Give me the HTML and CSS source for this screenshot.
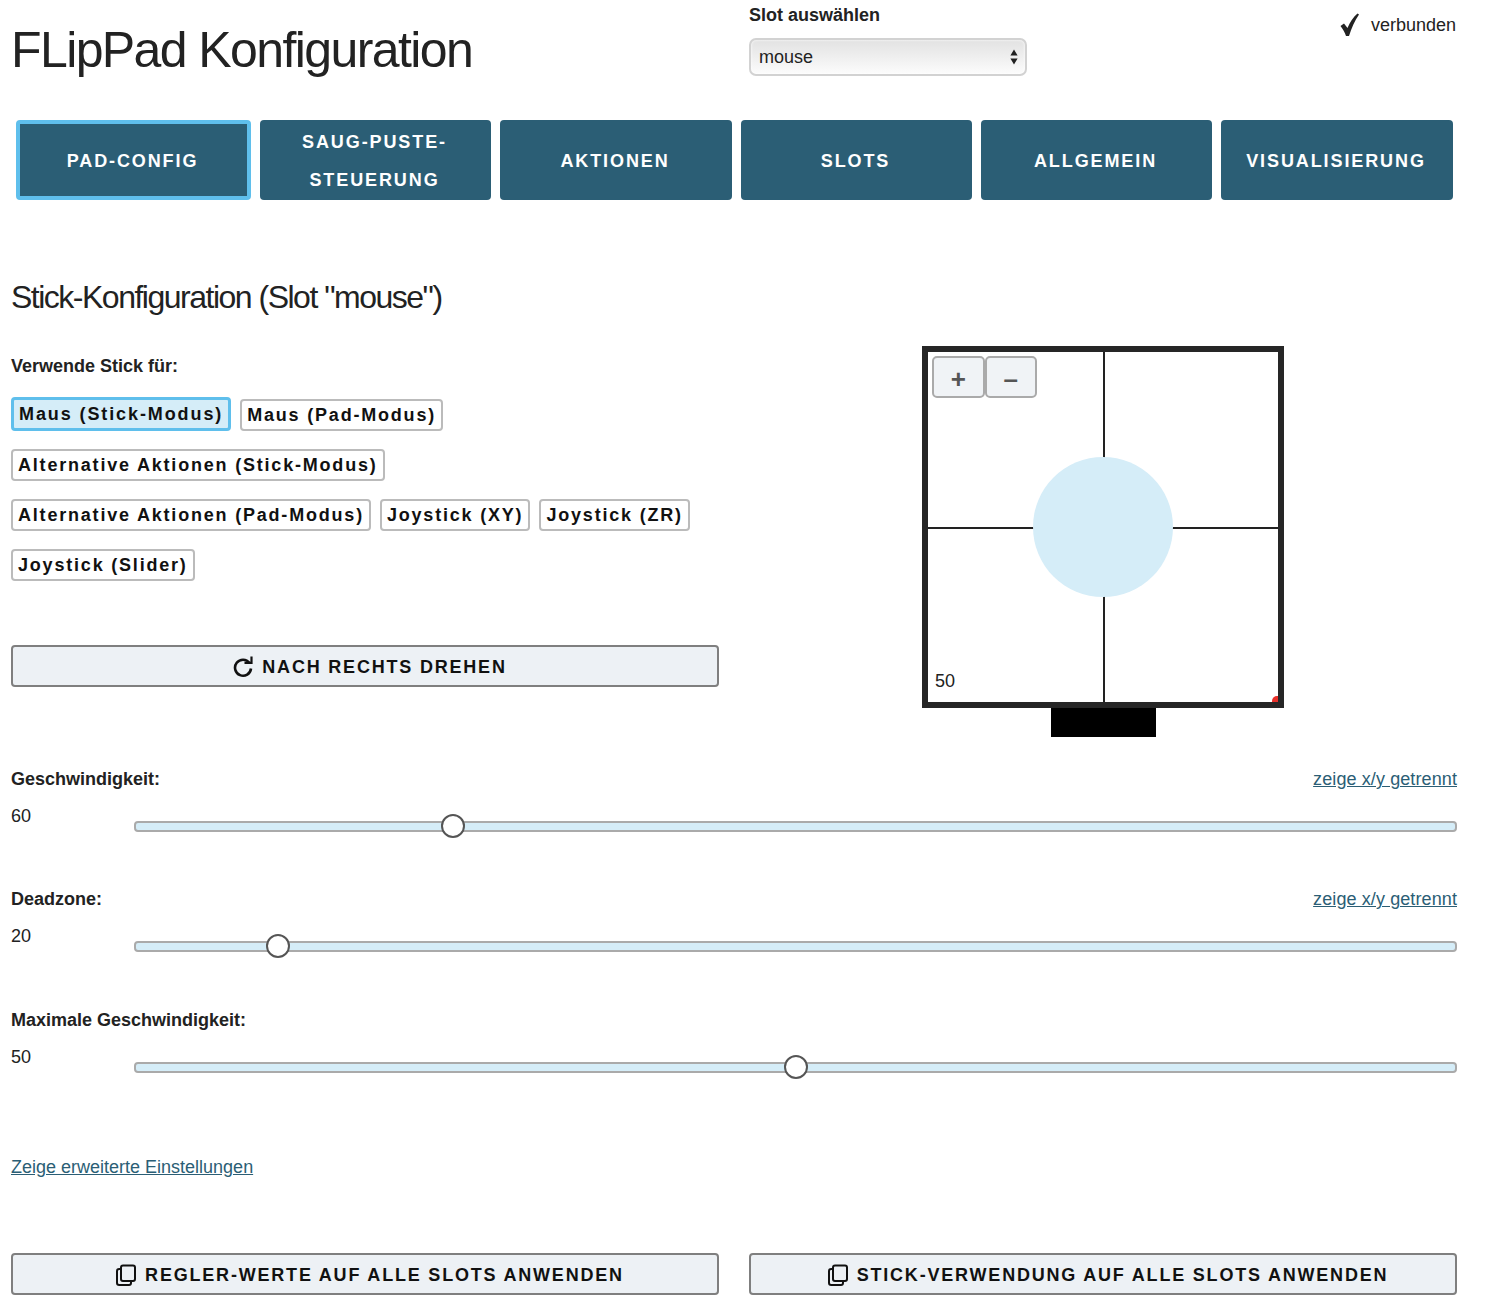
FILE: index.html
```html
<!DOCTYPE html>
<html lang="de">
<head>
    <meta charset="UTF-8">
    <meta name="viewport" content="width=device-width, initial-scale=1.0">
    <title>FLipPad Konfiguration</title>
    <link rel="stylesheet" href="styles.css">
</head>
<body>
    <div class="page">
        <!-- Header -->
        <header class="header">
            <h1 class="title">FLipPad Konfiguration</h1>
            <div class="header-right">
                <div class="slot-box">
                    <label class="field-label" for="slot-select">Slot auswählen</label>
                    <div class="select-wrap">
                        <select id="slot-select" class="slot-select">
                            <option>mouse</option>
                        </select>
                        <svg class="select-arrows" width="8" height="16" viewBox="0 0 8 16"><path d="M4 0.5L7.6 6.5H0.4Z M4 15.5L0.4 9.5H7.6Z" fill="#222"/></svg>
                    </div>
                </div>
                <div class="status">
                    <svg class="status-icon" width="20" height="24" viewBox="0 0 20 24"><path d="M0.5 13L4 10.500L7.500 15C10 9 13 4.500 17.500 0.500L19 1.500C14.500 8 11.500 15 9 23H6C5 19.500 3 16.500 0.5 13Z" fill="#222"/></svg>
                    <span>verbunden</span>
                </div>
            </div>
        </header>

        <!-- Tabs -->
        <nav class="tabs">
            <button class="tab tab-active">Pad-Config</button>
            <button class="tab">Saug-Puste-Steuerung</button>
            <button class="tab">Aktionen</button>
            <button class="tab">Slots</button>
            <button class="tab">Allgemein</button>
            <button class="tab">Visualisierung</button>
        </nav>

        <h2 class="section-title">Stick-Konfiguration (Slot "mouse")</h2>

        <div class="columns">
            <div class="stick-options">
                <div class="field-label">Verwende Stick für:</div>
                <div class="mode-list">
                    <button class="mode mode-active">Maus (Stick-Modus)</button>
                    <button class="mode">Maus (Pad-Modus)</button>
                    <button class="mode">Alternative Aktionen (Stick-Modus)</button>
                    <button class="mode">Alternative Aktionen (Pad-Modus)</button>
                    <button class="mode">Joystick (XY)</button>
                    <button class="mode">Joystick (ZR)</button>
                    <button class="mode">Joystick (Slider)</button>
                </div>
                <button class="action rotate-button">
                    <svg width="20" height="22" viewBox="0 0 20 22" fill="none"><path d="M16.500 7A8 8 0 1 0 18 12.500" stroke="#111" stroke-width="2.600"/><path d="M11.500 6.800H18.500V0.500" stroke="#111" stroke-width="2.200"/></svg>
                    Nach rechts drehen
                </button>
            </div>

            <div class="stick-view">
                <div class="stick-canvas">
                    <div class="line-v"></div>
                    <div class="line-h"></div>
                    <div class="deadzone"></div>
                    <div class="zoom-buttons">
                        <button class="zoom">+</button>
                        <button class="zoom">–</button>
                    </div>
                    <div class="canvas-value">50</div>
                    <div class="cursor-dot"></div>
                </div>
                <div class="stick-foot"></div>
            </div>
        </div>

        <!-- Sliders -->
        <div class="slider-block">
            <div class="slider-head">
                <span class="field-label">Geschwindigkeit:</span>
                <a class="link" href="#">zeige x/y getrennt</a>
            </div>
            <div class="slider-row">
                <span class="slider-value">60</span>
                <input class="slider" type="range" min="0" max="255" value="60">
            </div>
        </div>

        <div class="slider-block">
            <div class="slider-head">
                <span class="field-label">Deadzone:</span>
                <a class="link" href="#">zeige x/y getrennt</a>
            </div>
            <div class="slider-row">
                <span class="slider-value">20</span>
                <input class="slider" type="range" min="0" max="200" value="20">
            </div>
        </div>

        <div class="slider-block">
            <div class="slider-head">
                <span class="field-label">Maximale Geschwindigkeit:</span>
            </div>
            <div class="slider-row">
                <span class="slider-value">50</span>
                <input class="slider" type="range" min="0" max="100" value="50">
            </div>
        </div>

        <a class="link more-link" href="#">Zeige erweiterte Einstellungen</a>

        <div class="apply-row">
            <button class="action">
                <svg width="20" height="22" viewBox="0 0 20 22" fill="none"><rect x="5" y="1.500" width="14" height="15.500" rx="2" stroke="#111" stroke-width="2"/><path d="M5 5H3.200C2 5 1 6 1 7.200V18.800C1 20 2 21 3.200 21H13C14.200 21 15 20 15 19V17" stroke="#111" stroke-width="2"/></svg>
                Regler-Werte auf alle Slots anwenden
            </button>
            <button class="action">
                <svg width="20" height="22" viewBox="0 0 20 22" fill="none"><rect x="5" y="1.500" width="14" height="15.500" rx="2" stroke="#111" stroke-width="2"/><path d="M5 5H3.200C2 5 1 6 1 7.200V18.800C1 20 2 21 3.200 21H13C14.200 21 15 20 15 19V17" stroke="#111" stroke-width="2"/></svg>
                Stick-Verwendung auf alle Slots anwenden
            </button>
        </div>
    </div>
</body>
</html>
```

FILE: styles.css
```css
body {
    margin: 0;
    font-family: "Liberation Sans", Arial, sans-serif;
    font-size: 18px;
    color: #222;
    background: #fff;
}

button {
    font-family: inherit;
    cursor: pointer;
}

.page {
    width: 1446px;
    margin-left: 11px;
    padding-bottom: 18px;
}

/* Header */
.header {
    display: grid;
    grid-template-columns: 708px 708px;
    column-gap: 30px;
    height: 120px;
}

.title {
    margin: 20px 0 0;
    font-size: 50px;
    line-height: 60px;
    font-weight: 400;
    letter-spacing: -1.6px;
}

.header-right {
    display: flex;
    justify-content: space-between;
}

.slot-box {
    padding-top: 5px;
}

.field-label {
    display: block;
    font-size: 18px;
    line-height: 20px;
    font-weight: 700;
}

.select-wrap {
    position: relative;
    width: 278px;
    margin-top: 13px;
}

.slot-select {
    display: block;
    width: 100%;
    height: 38px;
    padding: 0 8px;
    border: 2px solid #d2d2d2;
    border-radius: 7px;
    background: linear-gradient(#e2e2e2, #fcfcfc);
    box-shadow: inset 0 0 3px #fff;
    font-family: inherit;
    font-size: 18px;
    color: #222;
    appearance: none;
    -webkit-appearance: none;
}

.select-arrows {
    position: absolute;
    top: 11px;
    right: 9px;
}

.status {
    display: flex;
    align-items: flex-start;
    gap: 11px;
    padding: 13px 1px 0 0;
    font-size: 18px;
    line-height: 25px;
}

/* Tabs */
.tabs {
    display: grid;
    grid-template-columns: 235px 231px 232px 231px 231px 232px;
    gap: 9px;
    margin: 0 4px 0 5px;
}

.tab {
    height: 80px;
    padding: 2px 21px 0 19px;
    border: none;
    border-radius: 4px;
    background: #2b5e75;
    color: #fff;
    font-size: 18px;
    font-weight: 700;
    line-height: 38px;
    letter-spacing: 1.9px;
    text-transform: uppercase;
}

.tab-active {
    border: 4px solid #5fbfec;
}

.section-title {
    margin: 76px 0 0;
    font-size: 32px;
    line-height: 42px;
    font-weight: 400;
    letter-spacing: -1.5px;
}

/* Stick section */
.columns {
    display: grid;
    grid-template-columns: 708px 708px;
    column-gap: 30px;
}

.stick-options {
    padding-top: 38px;
}

.mode-list {
    display: flex;
    flex-wrap: wrap;
    align-items: flex-end;
    column-gap: 9px;
    row-gap: 18px;
    margin-top: 21px;
    padding-right: 20px;
}

.mode {
    height: 32px;
    padding: 0 5px;
    border: 2px solid #bbb;
    border-radius: 4px;
    background: #fff;
    color: #111;
    font-size: 18px;
    font-weight: 700;
    letter-spacing: 1.8px;
}

.mode-active {
    height: 34px;
    padding: 1px 5px 0;
    border: 3px solid #5fbfec;
    background: #d5edf8;
    letter-spacing: 1.9px;
}

.action {
    display: flex;
    align-items: center;
    justify-content: center;
    gap: 9px;
    width: 100%;
    height: 42px;
    padding: 2px 0 0 10px;
    border: 2px solid #7f7f7f;
    border-radius: 4px;
    background: #edf1f5;
    color: #111;
    font-size: 18px;
    font-weight: 700;
    letter-spacing: 1.8px;
    text-transform: uppercase;
}

.rotate-button {
    margin-top: 64px;
}

.stick-view {
    display: flex;
    flex-direction: column;
    align-items: center;
    padding-top: 28px;
}

.stick-canvas {
    position: relative;
    width: 362px;
    height: 362px;
    box-sizing: border-box;
    border: 6px solid #262626;
    overflow: hidden;
}

.line-v {
    position: absolute;
    left: 175px;
    top: 0;
    bottom: 0;
    width: 2px;
    background: #222;
}

.line-h {
    position: absolute;
    left: 0;
    right: 0;
    top: 175px;
    height: 2px;
    background: #222;
}

.deadzone {
    position: absolute;
    left: 105px;
    top: 105px;
    width: 140px;
    height: 140px;
    border-radius: 50%;
    background: #d5edf8;
}

.zoom-buttons {
    position: absolute;
    left: 4px;
    top: 4px;
    display: flex;
}

.zoom {
    width: 52.500px;
    height: 42px;
    padding: 4px 0 0;
    border: 2px solid #aaa;
    border-radius: 5px;
    background: #f0f3f6;
    color: #555;
    font-size: 26px;
    font-weight: 700;
    line-height: 34px;
}

.canvas-value {
    position: absolute;
    left: 7px;
    top: 318px;
    font-size: 18px;
    line-height: 22px;
}

.cursor-dot {
    position: absolute;
    right: -4px;
    bottom: -4px;
    width: 10px;
    height: 10px;
    border-radius: 50%;
    background: #e8302a;
}

.stick-foot {
    width: 105px;
    height: 29px;
    background: #000;
}

/* Sliders */
.slider-block {
    height: 121px;
}

.columns + .slider-block {
    height: 120px;
    margin-top: 32px;
}

.slider-head {
    display: flex;
    justify-content: space-between;
    align-items: center;
    height: 20px;
}

.link {
    color: #2b5e75;
    font-size: 18px;
    line-height: 20px;
    letter-spacing: 0.1px;
}

.slider-row {
    display: flex;
    align-items: flex-start;
    margin-top: 17px;
}

.slider-value {
    width: 123px;
    line-height: 20px;
}

.slider {
    flex: 1;
    height: 24px;
    margin: 8px 0 0;
    background: transparent;
    appearance: none;
    -webkit-appearance: none;
}

.slider::-webkit-slider-runnable-track {
    height: 11px;
    box-sizing: border-box;
    border: 2px solid #aaa;
    border-radius: 4px;
    background: #d5edf8;
}

.slider::-webkit-slider-thumb {
    width: 24px;
    height: 24px;
    margin-top: -8.500px;
    box-sizing: border-box;
    border: 2px solid #555;
    border-radius: 50%;
    background: #fff;
    -webkit-appearance: none;
}

.more-link {
    display: block;
    width: fit-content;
    margin-top: 26px;
    letter-spacing: 0;
}

.apply-row {
    display: grid;
    grid-template-columns: 708px 708px;
    column-gap: 30px;
    margin-top: 76px;
}
```
